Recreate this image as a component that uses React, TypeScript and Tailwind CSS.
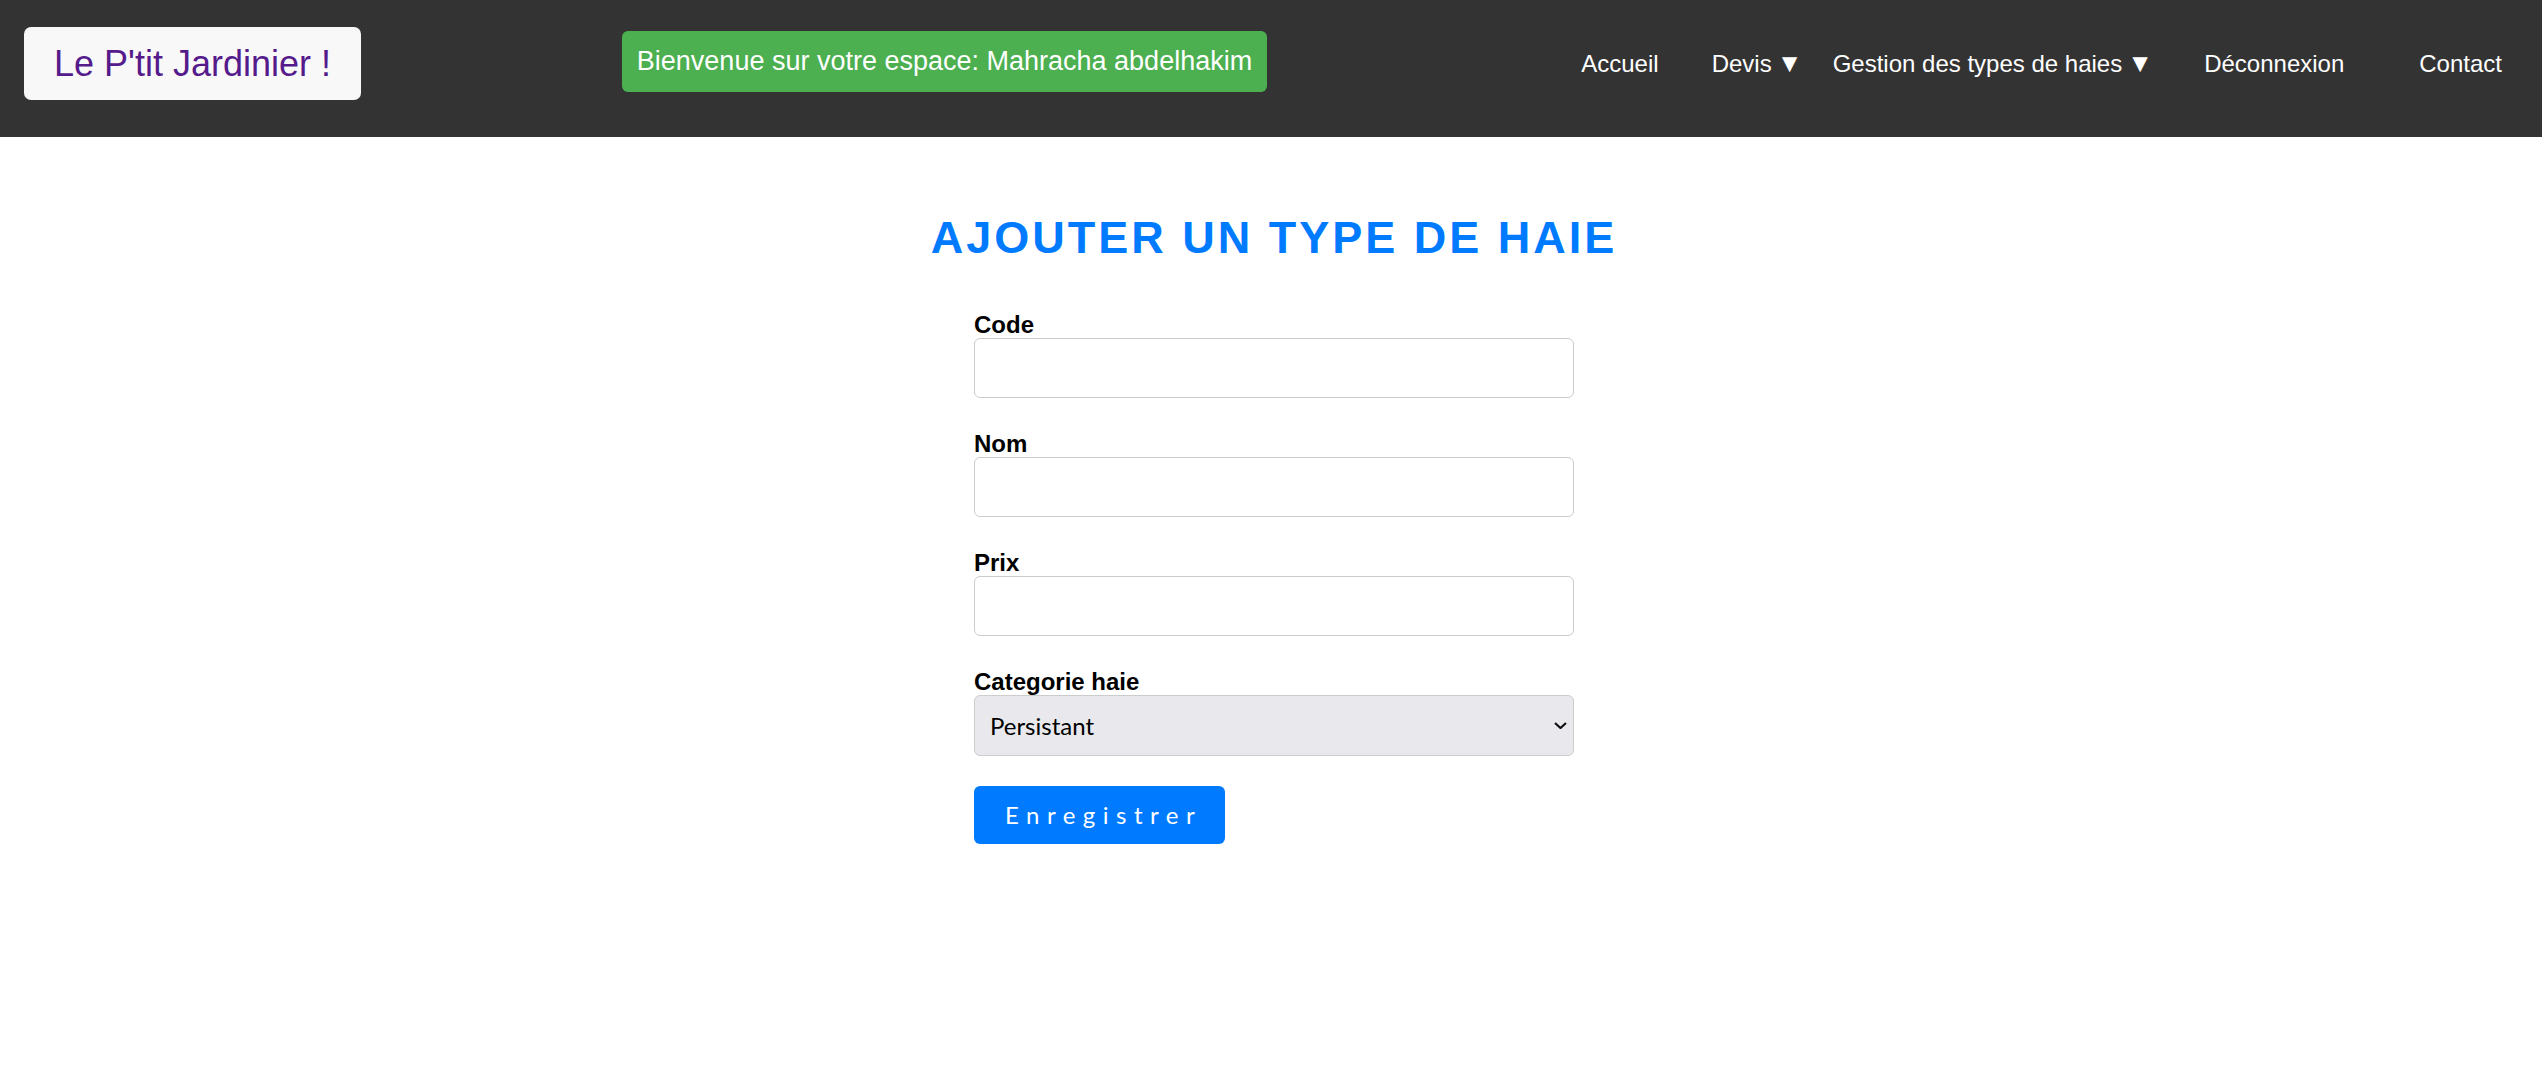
import React from 'react';

const fields = ['Code', 'Nom', 'Prix'];

const Caret = () => (
  <span className="ml-[5px] inline-block w-[15px] text-center text-[26px] leading-none">▼</span>
);

export default function App() {
  return (
    <div className="min-h-screen bg-white font-['Liberation_Sans',Arial,sans-serif]">
      <header className="flex h-[137px] items-center bg-[#333333] pb-[10px]">
        <a
          href="#"
          className="ml-[24px] flex h-[73px] w-[337px] items-center justify-center rounded-[7px] bg-[#f8f8f8] text-[36px] text-[#551a8b]"
        >
          Le P'tit Jardinier !
        </a>
        <div className="mb-[4px] ml-[261px] flex h-[61px] w-[645px] items-center justify-center rounded-[6px] bg-[#4caf50] text-[27px] text-white">
          Bienvenue sur votre espace: Mahracha abdelhakim
        </div>
        <nav className="ml-auto mr-[40px] flex items-center text-[24px] text-white">
          <a href="#">Accueil</a>
          <a href="#" className="ml-[53px] flex items-baseline">
            Devis
            <Caret />
          </a>
          <a href="#" className="ml-[41px] flex items-baseline">
            Gestion des types de haies
            <Caret />
          </a>
          <a href="#" className="ml-[62px]">Déconnexion</a>
          <a href="#" className="ml-[75px]">Contact</a>
        </nav>
      </header>

      <main className="flex flex-col items-center pt-[75px]">
        <h2 className="ml-[6px] text-[45px] font-bold uppercase leading-[52px] tracking-[3px] text-[#007bff]">
          Ajouter un type de haie
        </h2>

        <form className="ml-[6px] mt-[48px] flex w-[600px] flex-col" onSubmit={(e) => e.preventDefault()}>
          {fields.map((name) => (
            <div key={name} className="mb-[33px]">
              <label className="block text-[24px] font-bold leading-[26px] text-black">{name}</label>
              <input
                type="text"
                className="block h-[60px] w-full rounded-[6px] border border-[#cccccc] bg-white px-[15px] text-[24px] outline-none"
              />
            </div>
          ))}

          <label className="block text-[24px] font-bold leading-[26px] text-black">Categorie haie</label>
          <div className="relative h-[61px] w-full">
            <select className="h-full w-full appearance-none rounded-[6px] border border-[#cccccc] bg-[#e9e9ed] pl-[15px] font-['Lato','Noto_Sans',sans-serif] text-[24px] text-black outline-none">
              <option>Persistant</option>
              <option>Caduque</option>
            </select>
            <svg
              className="pointer-events-none absolute right-[7px] top-[27px] h-[7px] w-[13px]"
              viewBox="0 0 13 7"
              fill="none"
              stroke="#111"
              strokeWidth="2.2"
            >
              <path d="M1 1 L6.5 6 L12 1" />
            </svg>
          </div>

          <button
            type="submit"
            className="mt-[30px] h-[58px] w-[251px] rounded-[6px] bg-[#007bff] pl-[31px] text-left font-['Lato','Noto_Sans',sans-serif] text-[24px] tracking-[7.5px] text-white"
          >
            Enregistrer
          </button>
        </form>
      </main>
    </div>
  );
}
